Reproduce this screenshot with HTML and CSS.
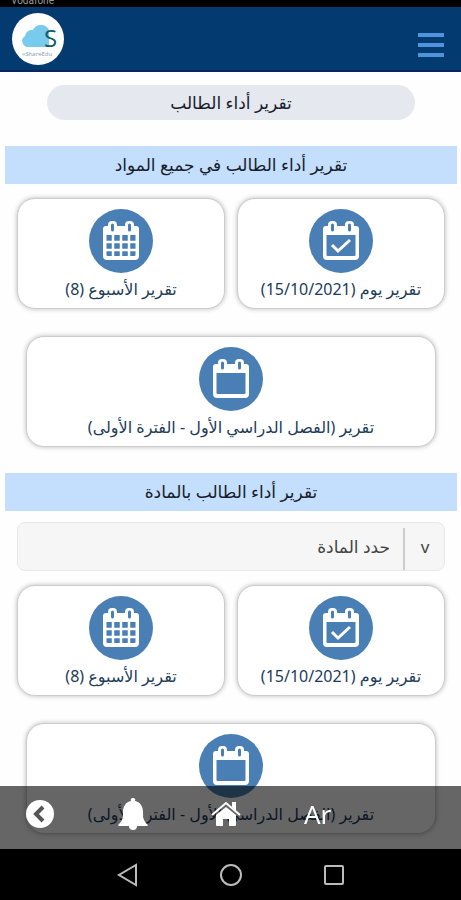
FILE: index.html
```html
<!DOCTYPE html>
<html lang="ar" dir="rtl">
<head>
    <meta charset="UTF-8">
    <meta name="viewport" content="width=device-width, initial-scale=1">
    <title>تقرير أداء الطالب</title>
    <link rel="stylesheet" href="styles.css">
</head>
<body>
    <!-- shared icons -->
    <svg class="sprite" aria-hidden="true">
        <symbol id="cal" viewBox="0 0 64 64">
            <path fill="#fff" fill-rule="evenodd" d="M17 17h30a3 3 0 0 1 3 3v27a4 4 0 0 1-4 4H18a4 4 0 0 1-4-4V20a3 3 0 0 1 3-3zM17.500 26v20a1 1 0 0 0 1 1h27a1 1 0 0 0 1-1V26z"/>
            <rect x="19" y="12" width="9" height="13" rx="4" fill="#fff"/>
            <rect x="36" y="12" width="9" height="13" rx="4" fill="#fff"/>
            <path stroke="#4a7fb5" stroke-width="3" stroke-linecap="round" d="M23.500 16v5M40.500 16v5"/>
        </symbol>
    </svg>

    <div class="status" dir="ltr">Vodafone</div>

    <header class="header" dir="ltr">
        <a class="logo" href="#" aria-label="eShareEdu">
            <svg viewBox="0 0 52 52" aria-hidden="true">
                <path fill="#79cbee" d="M17 34a6 6 0 0 1-4-11 7 7 0 0 1 8-6 9 9 0 0 1 16 0v17z"/>
                <text x="32" y="34" class="logo-s">S</text>
                <text x="10" y="43" class="logo-name"><tspan fill="#79cbee">e</tspan>ShareEdu</text>
            </svg>
        </a>
        <button class="menu" aria-label="القائمة"><span></span><span></span><span></span></button>
    </header>

    <main>
        <h1>تقرير أداء الطالب</h1>

        <section>
            <h2>تقرير أداء الطالب في جميع المواد</h2>
            <div class="cards">
                <a class="card" href="#">
                    <svg class="icon" viewBox="0 0 64 64"><use href="#cal"/><path d="M23 36l6 6 12-11" fill="none" stroke="#fff" stroke-width="3"/></svg>
                    <span>تقرير يوم (15/10/2021)</span>
                </a>
                <a class="card" href="#">
                    <svg class="icon" viewBox="0 0 64 64"><use href="#cal"/><path d="M24 25v23M32 25v23M40 25v23M16 33h32M16 41h32" fill="none" stroke="#fff" stroke-width="2.500"/></svg>
                    <span>تقرير الأسبوع (8)</span>
                </a>
                <a class="card wide" href="#">
                    <svg class="icon" viewBox="0 0 64 64"><use href="#cal"/></svg>
                    <span>تقرير (الفصل الدراسي الأول - الفترة الأولى)</span>
                </a>
            </div>
        </section>

        <section>
            <h2 id="subjectTitle">تقرير أداء الطالب بالمادة</h2>
            <div class="select">
                <select aria-labelledby="subjectTitle">
                    <option>حدد المادة</option>
                </select>
                <span class="arrow" aria-hidden="true">v</span>
            </div>
            <div class="cards">
                <a class="card" href="#">
                    <svg class="icon" viewBox="0 0 64 64"><use href="#cal"/><path d="M23 36l6 6 12-11" fill="none" stroke="#fff" stroke-width="3"/></svg>
                    <span>تقرير يوم (15/10/2021)</span>
                </a>
                <a class="card" href="#">
                    <svg class="icon" viewBox="0 0 64 64"><use href="#cal"/><path d="M24 25v23M32 25v23M40 25v23M16 33h32M16 41h32" fill="none" stroke="#fff" stroke-width="2.500"/></svg>
                    <span>تقرير الأسبوع (8)</span>
                </a>
                <a class="card wide" href="#">
                    <svg class="icon" viewBox="0 0 64 64"><use href="#cal"/></svg>
                    <span>تقرير (الفصل الدراسي الأول - الفترة الأولى)</span>
                </a>
            </div>
        </section>
    </main>

    <div class="bottom" dir="ltr">
        <nav class="tabs">
            <a href="#" aria-label="رجوع"><svg width="30" height="30" viewBox="0 0 30 30"><circle cx="15" cy="15" r="14" fill="#fff"/><path d="M18 8l-7 7 7 7" fill="none" stroke="#555" stroke-width="4"/></svg></a>
            <a href="#" aria-label="الإشعارات"><svg width="30" height="34" viewBox="0 0 30 34"><path fill="#fff" d="M15 1a2 2 0 0 1 2 3c5 1 8 5 8 11 0 7 1 9 4 12 1 1 1 2 0 2H19a4 4 0 0 1-8 0H1c-1 0-1-1 0-2 3-3 4-5 4-12 0-6 3-10 8-11a2 2 0 0 1 2-3z"/></svg></a>
            <a href="#" aria-label="الرئيسية"><svg width="30" height="28" viewBox="0 0 30 28"><path fill="#fff" d="M15 7l10 8v10a1 1 0 0 1-1 1h-6v-7h-6v7H6a1 1 0 0 1-1-1V15z"/><path fill="none" stroke="#fff" stroke-width="2" d="M1 15L15 3l14 12"/><path fill="#fff" d="M21 2h4v9l-4-4z"/></svg></a>
            <a href="#" class="lang">Ar</a>
        </nav>
        <div class="system">
            <svg width="24" height="24" viewBox="0 0 24 24"><path d="M20 2v20L3 12z"/></svg>
            <svg width="24" height="24" viewBox="0 0 24 24"><circle cx="12" cy="12" r="10"/></svg>
            <svg width="24" height="24" viewBox="0 0 24 24"><rect x="3" y="3" width="18" height="18" rx="1"/></svg>
        </div>
    </div>
</body>
</html>
```
FILE: styles.css
```css
* { box-sizing: border-box; }
body { margin: 0; background: #fefefe; color: #171c2c; font-family: "Noto Sans", "DejaVu Sans", sans-serif; }
a { color: inherit; text-decoration: none; }
.sprite { position: absolute; width: 0; height: 0; }

.status { display: flex; align-items: flex-end; height: 7px; padding: 0 11px; overflow: hidden; background: #000; color: #999; font-family: Roboto, sans-serif; font-size: 10px; line-height: 12px; }
.header { display: flex; justify-content: space-between; height: 65px; padding: 6px 17px 0 12px; background: #033a70; border-bottom: 2px solid #0a2460; }
.logo { width: 52px; height: 52px; background: #fff; border-radius: 50%; }
.logo svg { display: block; width: 100%; }
.logo-s { font: 24px "Open Sans", sans-serif; fill: #17586c; }
.logo-name { font: 6px "Open Sans", sans-serif; fill: #8b9aa5; }
.menu { display: flex; flex-direction: column; gap: 6px; align-self: center; margin-top: 6px; padding: 0; background: none; border: none; cursor: pointer; }
.menu span { width: 26px; height: 4px; background: #4f93dc; }

main { padding-left: 1px; }
h1, h2 { margin: 0; font-size: 17px; font-weight: normal; text-align: center; }
h1 { margin: 13px 10% 26px; line-height: 35px; background: #e5e8ee; border-radius: 18px; }
h2 { margin: 0 4px; line-height: 38px; background: #c4dffd; }

.cards { display: grid; grid-template-columns: 1fr 1fr; gap: 27px 12px; padding: 14px 16px 26px; }
.card { display: flex; flex-direction: column; align-items: center; height: 111px; padding-top: 10px; background: #fff; border: 1px solid #ccc; border-radius: 18px; box-shadow: 0 0 5px #bbb; color: #1d3c5a; font-size: 16px; line-height: 24px; white-space: nowrap; }
.card span { margin-top: 4px; }
.wide { grid-column: 1 / 3; margin: 0 9px; }
.icon { width: 64px; height: 64px; background: #4a7fb5; border-radius: 50%; }

.select { position: relative; margin: 11px 16px 0; }
.select select { display: block; width: 100%; height: 49px; padding: 0 54px 0 10px; appearance: none; background: #f6f6f6; border: 1px solid #e8e8e8; border-radius: 8px; color: #444; font: inherit; font-size: 17px; }
.arrow { position: absolute; top: 6px; right: 0; width: 42px; height: 42px; border-left: 2px solid #ccc; color: #444; font-size: 17px; line-height: 38px; text-align: center; pointer-events: none; }

.bottom { position: fixed; bottom: 0; left: 0; right: 0; }
.tabs { display: flex; align-items: center; gap: 63px; height: 63px; padding: 0 25px 8px; background: rgba(0, 0, 0, 0.6); color: #fff; }
.tabs a { display: flex; justify-content: center; }
.lang { font-size: 26px; line-height: 30px; }
.system { display: flex; justify-content: center; gap: 79px; height: 51px; padding-top: 14px; background: #000; }
.system svg { fill: none; stroke: #bbb; stroke-width: 2; }
```
